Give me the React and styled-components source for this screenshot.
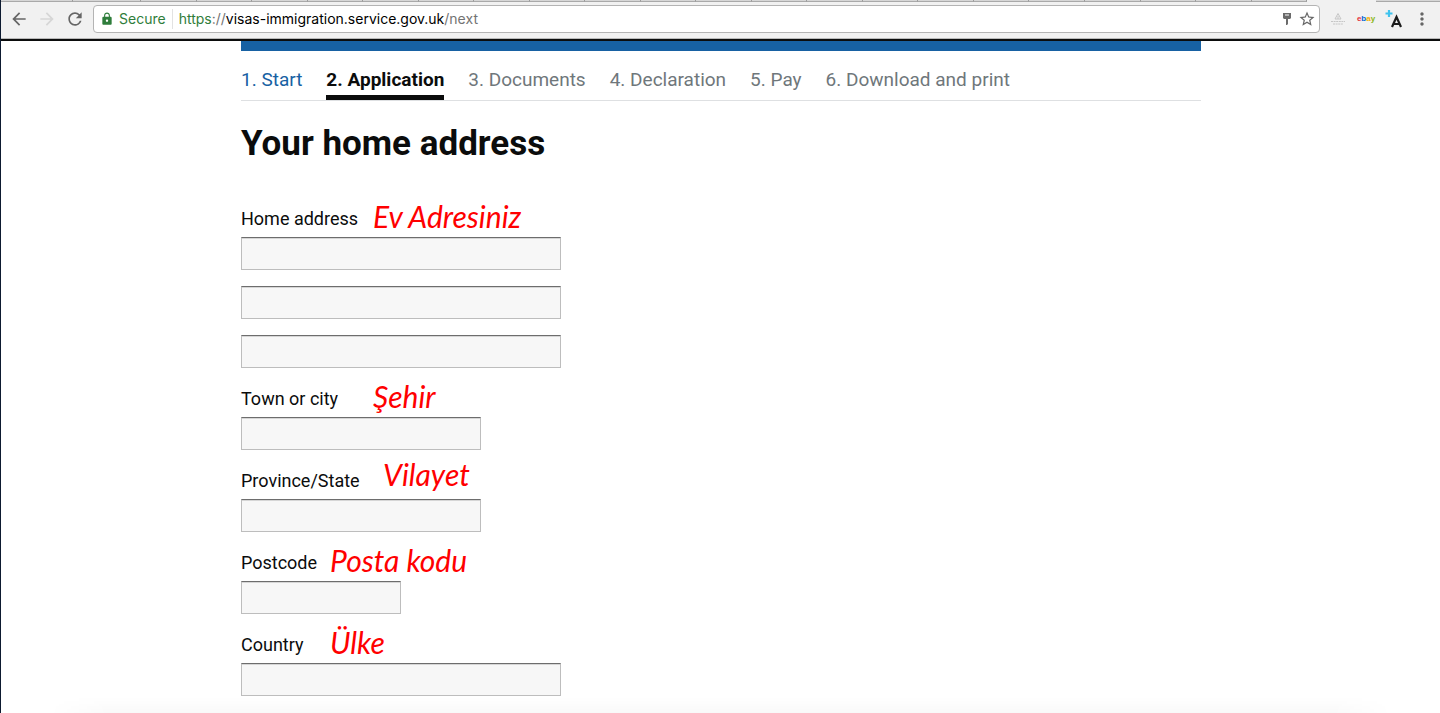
import React from "react";
import styled, { createGlobalStyle, css } from "styled-components";
import { MdArrowBack, MdArrowForward, MdRefresh, MdLock, MdStarBorder, MdMoreVert } from "react-icons/md";

const Global = createGlobalStyle`
  *, *::before, *::after { box-sizing: border-box; }
  body { margin: 0; background: #fff; }
`;

const Window = styled.div`
  min-height: 100vh;
  display: flex;
  flex-direction: column;
  border-left: 1px solid #0d1a30;
  color: #0b0c0c;
  font-family: Roboto, sans-serif;
`;

const TabStrip = styled.div`
  display: flex;
  height: 2px;
  background: #f1f1f1;
`;

const Tab = styled.div`
  flex: ${(p) => p.$grow || 56};
  background: #d6d6d6;
  border-right: 1px solid #9b9b9b;
  border-bottom: 1px solid #a9a9a9;
`;

const ActiveTab = styled.div`
  flex: 0 0 69px;
`;

const TabEnd = styled.div`
  flex: 0 0 64px;
  background: #d6d6d6;
  border-bottom: 1px solid #a9a9a9;
`;

const Toolbar = styled.header`
  display: flex;
  align-items: center;
  height: 39px;
  padding: 0 8px 3px;
  background: #f1f1f1;
  border-bottom: 2px solid #0b0c0c;
  box-shadow: inset 0 -1px 0 #b9b9b9;
`;

const IconButton = styled.button`
  display: flex;
  align-items: center;
  justify-content: center;
  flex: none;
  width: ${(p) => p.$width || 28}px;
  height: 28px;
  padding: 0;
  border: 0;
  background: none;
  color: ${(p) => p.$color || "#666"};
  svg { flex: none; }
`;

const AddressBar = styled.div`
  display: flex;
  align-items: center;
  flex: 1;
  min-width: 0;
  height: 28px;
  margin-left: 8px;
  padding: 0 2px 0 6px;
  border: 1px solid #b4b4b4;
  border-radius: 4px;
  background: #fff;
  font: 14px/20px Inter, sans-serif;
`;

const Secure = styled.span`
  display: flex;
  align-items: center;
  gap: 5px;
  color: #2f7d3b;
  padding-right: 6px;
  border-right: 1px solid #e2e2e2;
  margin-right: 6px;
`;

const Url = styled.span`
  flex: 1;
  color: #000;
`;

const Scheme = styled.span`
  color: #2f7d3b;
`;

const Faint = styled.span`
  color: #737373;
`;

const Ebay = styled.span`
  font: bold 8px/12px "Liberation Sans", sans-serif;
`;

const Tint = styled.span`
  color: ${(p) => p.$color};
`;

const Page = styled.main`
  position: relative;
  flex: 1;
  padding-left: 1px;
`;

const Column = styled.div`
  max-width: 960px;
  margin: 0 auto;
  padding-bottom: 17px;
`;

const BlueBar = styled.div`
  height: 10px;
  background: #1761a3;
`;

const Steps = styled.nav`
  display: flex;
  gap: 24px;
  height: 50px;
  padding-top: 14px;
  border-bottom: 1px solid #dee0e2;
  font-size: 19px;
  line-height: 30px;
`;

const Step = styled.a`
  color: ${(p) => p.$color || "#6f777b"};
  text-decoration: none;
  white-space: nowrap;
  ${(p) =>
    p.$current &&
    css`
      font-weight: 700;
      border-bottom: 5px solid #0b0c0c;
    `}
`;

const Title = styled.h1`
  margin: 18px 0 35px;
  font-size: 35px;
  line-height: 50px;
`;

const Form = styled.form`
  display: flex;
  flex-direction: column;
  gap: 16px;
`;

const Field = styled.div`
  display: flex;
  flex-direction: column;
`;

const LabelRow = styled.div`
  display: flex;
  align-items: flex-start;
  height: 33px;
`;

const Label = styled.label`
  min-width: ${(p) => p.$width}px;
  font-size: 18px;
  line-height: 30px;
  white-space: nowrap;
`;

const Note = styled.span`
  color: #f00;
  font: italic 30px/24px Lato, sans-serif;
  ${(p) => p.$raised && "line-height: 16px;"}
`;

const Input = styled.input`
  width: ${(p) => p.$width}px;
  max-width: 100%;
  height: 33px;
  padding: 4px;
  border: 1px solid #bdbdbd;
  border-top: 1px solid #6d6d6d;
  border-radius: 0;
  background: #f7f7f7;
  box-shadow: inset 0 1px 0 #d6d6d6;
  font: 18px/24px Roboto, sans-serif;
`;

const BottomShade = styled.div`
  position: absolute;
  left: 48px;
  right: 48px;
  bottom: 0;
  height: 16px;
  background: linear-gradient(to bottom, rgba(0, 0, 0, 0), rgba(0, 0, 0, 0.025));
  mask-image: linear-gradient(to right, transparent, #000 60px, #000 calc(100% - 60px), transparent);
  pointer-events: none;
`;

const KeyIcon = () => (
  <svg width="10" height="14" viewBox="0 0 10 14" fill="#6b6b6b" aria-hidden="true">
    <path fillRule="evenodd" d="M1 1h8v5l-1 1H6v5l-1 1H4V7H2L1 6zM3 2.5v1h4v-1z" />
  </svg>
);

const TriangleIcon = () => (
  <svg width="16" height="14" viewBox="0 0 16 14" fill="none" stroke="#c6c6c6" aria-hidden="true">
    <path d="M8 1.5 5 7h6zM8 4v3" />
    <path d="M1 9.5h14M3 12h10" strokeDasharray="2 0.6" />
  </svg>
);

const PlusAIcon = () => (
  <svg width="18" height="20" viewBox="0 0 18 20" fill="none" aria-hidden="true">
    <path d="M4 1v7M0.5 4.5h7" stroke="#3fc3ee" strokeWidth="2.2" />
    <path d="M7 18 11.5 8 16 18M8.5 15h6" stroke="#1c1c1c" strokeWidth="2.2" />
  </svg>
);

const steps = [
  ["1. Start", "#1761a3"],
  ["2. Application", "#0b0c0c", true],
  ["3. Documents"],
  ["4. Declaration"],
  ["5. Pay"],
  ["6. Download and print"],
];

const fields = [
  { id: "town", label: "Town or city", note: "Şehir", labelWidth: 132, width: 240 },
  { id: "province", label: "Province/State", note: "Vilayet", labelWidth: 142, width: 240, raised: true },
  { id: "postcode", label: "Postcode", note: "Posta kodu", labelWidth: 89, width: 160 },
  { id: "country", label: "Country", note: "Ülke", labelWidth: 89, width: 320 },
];

export default function App() {
  return (
    <Window>
      <Global />
      <TabStrip>
        <Tab $grow={73} />
        <Tab $grow={69} />
        {Array.from({ length: 21 }, (_, i) => (
          <Tab key={i} />
        ))}
        <ActiveTab />
        <TabEnd />
      </TabStrip>
      <Toolbar>
        <IconButton aria-label="Back" $width={20}><MdArrowBack size={20} /></IconButton>
        <IconButton aria-label="Forward" $width={36} $color="#d6d6d6"><MdArrowForward size={20} /></IconButton>
        <IconButton aria-label="Reload" $width={20}><MdRefresh size={20} /></IconButton>
        <AddressBar>
          <Secure><MdLock size={14} />Secure</Secure>
          <Url>
            <Scheme>https</Scheme><Faint>://</Faint>visas-immigration.service.gov.uk<Faint>/next</Faint>
          </Url>
          <IconButton aria-label="Saved passwords" $width={20}><KeyIcon /></IconButton>
          <IconButton aria-label="Bookmark" $width={20}><MdStarBorder size={18} /></IconButton>
        </AddressBar>
        <IconButton aria-label="Extension" $width={36}><TriangleIcon /></IconButton>
        <IconButton aria-label="eBay" $width={20}>
          <Ebay>
            <Tint $color="#e53238">e</Tint><Tint $color="#0064d2">b</Tint><Tint $color="#f5af02">a</Tint><Tint $color="#86b817">y</Tint>
          </Ebay>
        </IconButton>
        <IconButton aria-label="Text size" $width={36}><PlusAIcon /></IconButton>
        <IconButton aria-label="Menu" $width={20}><MdMoreVert size={20} /></IconButton>
      </Toolbar>
      <Page>
        <Column>
          <BlueBar />
          <Steps>
            {steps.map(([text, color, current]) => (
              <Step key={text} href="#" $color={color} $current={current}>{text}</Step>
            ))}
          </Steps>
          <Title>Your home address</Title>
          <Form>
            <Field>
              <LabelRow>
                <Label htmlFor="address1" $width={132}>Home address</Label>
                <Note>Ev Adresiniz</Note>
              </LabelRow>
              <Input id="address1" $width={320} />
            </Field>
            <Input aria-label="Home address line 2" $width={320} />
            <Input aria-label="Home address line 3" $width={320} />
            {fields.map((f) => (
              <Field key={f.id}>
                <LabelRow>
                  <Label htmlFor={f.id} $width={f.labelWidth}>{f.label}</Label>
                  <Note $raised={f.raised}>{f.note}</Note>
                </LabelRow>
                <Input id={f.id} $width={f.width} />
              </Field>
            ))}
          </Form>
        </Column>
        <BottomShade />
      </Page>
    </Window>
  );
}
